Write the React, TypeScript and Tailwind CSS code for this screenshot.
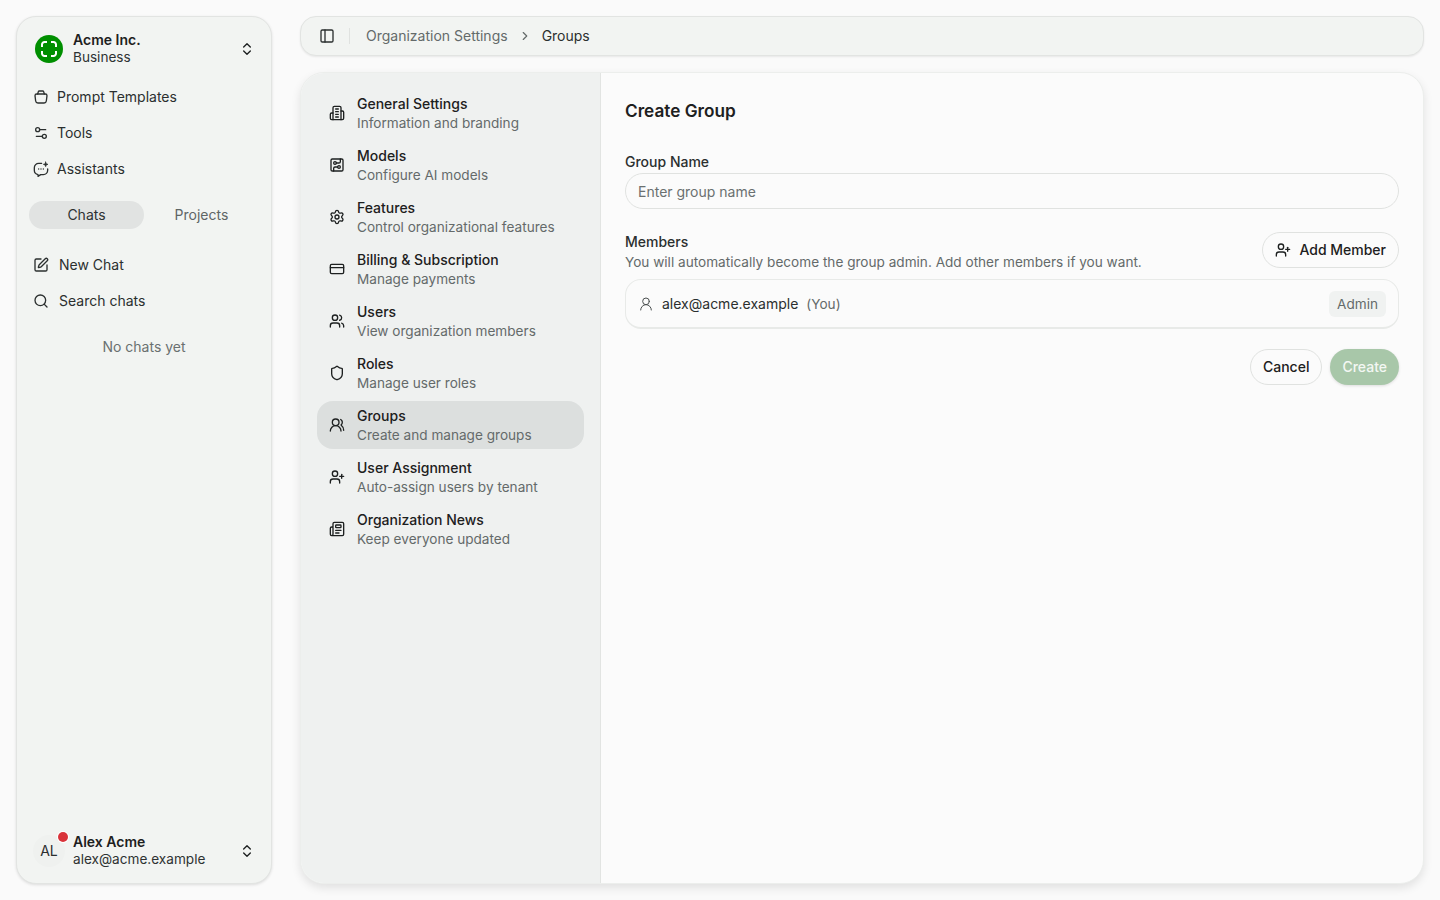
import { Search, SquarePen, ChevronsUpDown, PanelLeft, ChevronRight, Settings, CreditCard, Users, UsersRound, Shield, UserPlus, Newspaper, UserRound, Settings2, CircuitBoard } from "lucide-react";
import type { ReactNode } from "react";

const font = "font-['Inter','Noto_Sans',sans-serif]";

function Ico({ children }: { children: ReactNode }) {
  return (
    <svg width="16" height="16" viewBox="0 0 24 24" fill="none" stroke="currentColor" strokeWidth="2" strokeLinecap="round" strokeLinejoin="round" className="shrink-0">
      {children}
    </svg>
  );
}

const TemplatesIcon = () => (
  <Ico>
    <path d="M7 7.500 8 4a1.500 1.500 0 0 1 1.500-1h5A1.500 1.500 0 0 1 16 4l1 3.500" />
    <path d="M3 10c0-1.500 1-2.500 2.500-2.500h13C20 7.500 21 8.500 21 10l-1 8a3.500 3.500 0 0 1-3.500 3h-9A3.500 3.500 0 0 1 4 18z" />
  </Ico>
);

const AssistantIcon = () => (
  <Ico>
    <path d="M13 3.500H8.500A6.500 6.500 0 0 0 2 10v4a6.500 6.500 0 0 0 5.500 6.400V23l4-2.500h4A6.500 6.500 0 0 0 22 14v-2" />
    <path d="M19 1.500l.9 2.600 2.600.9-2.600.9-.9 2.600-.9-2.600-2.600-.9 2.600-.9z" fill="currentColor" strokeWidth="1" />
    <path d="M8.500 12h.01M12 12h.01M15.500 12h.01" />
  </Ico>
);

const BuildingIcon = () => (
  <Ico>
    <path d="M6 22V4a2 2 0 0 1 2-2h8a2 2 0 0 1 2 2v18Z" />
    <path d="M6 12H4a2 2 0 0 0-2 2v6a2 2 0 0 0 2 2h2" />
    <path d="M18 9h2a2 2 0 0 1 2 2v9a2 2 0 0 1-2 2h-2" />
    <path d="M10 6h4M10 10h4M10 14h4M10 18h4" />
  </Ico>
);

const LogoMark = () => (
  <svg width="28" height="28" viewBox="0 0 28 28" className="shrink-0">
    <circle cx="14" cy="14" r="14" fill="#008f00" />
    <path d="M7 12V9.500A2.500 2.500 0 0 1 9.500 7H12M16 7h2.500A2.500 2.500 0 0 1 21 9.500V12M21 16v2.500a2.500 2.500 0 0 1-2.500 2.500H16M12 21H9.500A2.500 2.500 0 0 1 7 18.500V16" fill="none" stroke="#fff" strokeWidth="2" />
  </svg>
);

const settingsItems = [
  { title: "General Settings", sub: "Information and branding", icon: <BuildingIcon /> },
  { title: "Models", sub: "Configure AI models", icon: <CircuitBoard size={16} /> },
  { title: "Features", sub: "Control organizational features", icon: <Settings size={16} /> },
  { title: "Billing & Subscription", sub: "Manage payments", icon: <CreditCard size={16} /> },
  { title: "Users", sub: "View organization members", icon: <Users size={16} /> },
  { title: "Roles", sub: "Manage user roles", icon: <Shield size={16} /> },
  { title: "Groups", sub: "Create and manage groups", icon: <UsersRound size={16} />, active: true },
  { title: "User Assignment", sub: "Auto-assign users by tenant", icon: <UserPlus size={16} /> },
  { title: "Organization News", sub: "Keep everyone updated", icon: <Newspaper size={16} /> },
];

function Sidebar() {
  return (
    <aside className="w-[256px] shrink-0 flex flex-col rounded-[20px] border border-[#e2e4e2] bg-[#f2f4f2] shadow-[0_1px_3px_rgba(0,0,0,0.12)] px-2 pt-3 pb-3">
      <div className="flex items-center h-10 pl-[10px] pr-2">
        <LogoMark />
        <div className="ml-[10px] flex-1">
          <div className="text-sm leading-[18px] font-semibold text-[#1d2020]">Acme Inc.</div>
          <div className="text-[13.6px] leading-[19px] -mt-px text-[#2e3232]">Business</div>
        </div>
        <ChevronsUpDown size={16} className="text-[#1d2020]" />
      </div>

      <nav className="mt-[10px] flex flex-col text-sm text-[#2b2f2f]">
        <a className="h-9 flex items-center gap-2 pl-2"><TemplatesIcon />Prompt Templates</a>
        <a className="h-9 flex items-center gap-2 pl-2"><Settings2 size={16} className="shrink-0" />Tools</a>
        <a className="h-9 flex items-center gap-2 pl-2"><AssistantIcon />Assistants</a>
      </nav>

      <div className="mt-[14px] mx-[4px] grid grid-cols-2 text-sm">
        <div className="h-7 flex items-center justify-center rounded-full bg-[#e1e3e2] text-[#2e3232]">Chats</div>
        <div className="h-7 flex items-center justify-center text-[#5f6565]">Projects</div>
      </div>

      <div className="mt-[18px] flex flex-col text-sm text-[#2b2f2f]">
        <a className="h-9 flex items-center gap-[10px] pl-2"><SquarePen size={16} />New Chat</a>
        <a className="h-9 flex items-center gap-[10px] pl-2"><Search size={16} />Search chats</a>
      </div>

      <p className="mt-[18px] text-center text-sm leading-5 text-[#6a7070]">No chats yet</p>

      <div className="mt-auto flex items-center pl-2 pr-2 h-10">
        <div className="relative size-8 shrink-0 rounded-full bg-[#eff1ef] flex items-center justify-center text-sm text-[#2b2f2f]">
          AL
          <span className="absolute -top-[3px] right-[-3px] size-[10px] rounded-full bg-[#d9333a] ring-1 ring-white" />
        </div>
        <div className="ml-2 flex-1 min-w-0">
          <div className="text-sm leading-[18px] font-semibold text-[#1d2020]">Alex Acme</div>
          <div className="text-[13.6px] leading-[19px] -mt-px text-[#2e3232]">alex@acme.example</div>
        </div>
        <ChevronsUpDown size={16} className="text-[#1d2020]" />
      </div>
    </aside>
  );
}

function SettingsNav() {
  return (
    <div className="w-[300px] shrink-0 border-r border-[#e2e4e2] bg-[#eff1f0] px-4 pt-4">
      <div className="flex flex-col gap-1">
        {settingsItems.map((item) => (
          <a
            key={item.title}
            className={"h-12 flex items-center gap-3 rounded-2xl px-3 text-[#1d2020] " + (item.active ? "bg-[#dcdfde]" : "")}
          >
            {item.icon}
            <div className="leading-[19px]">
              <div className="text-sm font-medium text-[#1d2020]">{item.title}</div>
              <div className="text-[13.6px] text-[#646a6a]">{item.sub}</div>
            </div>
          </a>
        ))}
      </div>
    </div>
  );
}

function CreateGroup() {
  return (
    <div className="flex-1 px-6 pt-[26px]">
      <h1 className="text-[17.2px] leading-6 font-semibold text-[#1d2020]">Create Group</h1>

      <label className="mt-[29px] block text-sm leading-5 font-medium text-[#2b2f2f]">Group Name</label>
      <input
        placeholder="Enter group name"
        className="mt-[1px] block w-full h-9 rounded-full border border-[#e0e2e0] px-3 text-sm text-[#1d2020] outline-none placeholder:text-[#6a7070]"
      />

      <div className="mt-[23px] flex items-start justify-between">
        <div className="leading-5">
          <div className="text-sm font-medium text-[#2b2f2f]">Members</div>
          <div className="text-[13.6px] text-[#646a6a]">You will automatically become the group admin. Add other members if you want.</div>
        </div>
        <button className="h-9 flex items-center gap-2 rounded-full border border-[#e0e2e0] px-3 text-sm font-medium text-[#1d2020]">
          <UserPlus size={16} />
          Add Member
        </button>
      </div>

      <div className="mt-[7px] h-[50px] flex items-center rounded-2xl border border-b-2 border-[#e8eae8] pl-3 pr-3 text-sm">
        <UserRound size={16} strokeWidth={1.5} className="text-[#4a4f4f]" />
        <span className="ml-2 text-[#2b2f2f]">alex@acme.example</span>
        <span className="ml-2 pt-px text-[13.6px] leading-5 text-[#646a6a]">(You)</span>
        <span className="ml-auto h-[26px] flex items-center rounded-md bg-[#f0f2f1] px-2 pt-[2px] text-[13.6px] text-[#646a6a]">Admin</span>
      </div>

      <div className="mt-5 flex justify-end gap-2 text-sm font-medium">
        <button className="h-9 rounded-full border border-[#e0e2e0] px-3 text-[#1d2020]">Cancel</button>
        <button className="h-9 rounded-full bg-[#a8c7a9] px-3 text-[#f3f7f3] shadow-[0_1px_3px_rgba(0,0,0,0.12)]">Create</button>
      </div>
    </div>
  );
}

export default function App() {
  return (
    <div className={"h-screen w-full flex gap-7 overflow-hidden bg-[#fafafa] p-4 " + font}>
      <Sidebar />
      <main className="flex-1 min-w-0 flex flex-col gap-4">
        <header className="h-10 shrink-0 flex items-center rounded-2xl border border-[#e2e4e2] bg-[#f2f4f2] shadow-[0_1px_2px_rgba(0,0,0,0.08)] pl-[18px] text-sm">
          <PanelLeft size={16} className="text-[#2b2f2f]" />
          <span className="ml-[14px] mr-4 h-4 w-px bg-[#e0e2e0]" />
          <span className="text-[#646a6a]">Organization Settings</span>
          <ChevronRight size={14} className="mx-[10px] text-[#646a6a]" />
          <span className="text-[#2b2f2f]">Groups</span>
        </header>
        <section className="flex-1 min-h-0 flex overflow-hidden rounded-[24px] border border-[#eceeec] bg-[#fbfbfb] shadow-[0_4px_10px_rgba(0,0,0,0.1)]">
          <SettingsNav />
          <CreateGroup />
        </section>
      </main>
    </div>
  );
}
